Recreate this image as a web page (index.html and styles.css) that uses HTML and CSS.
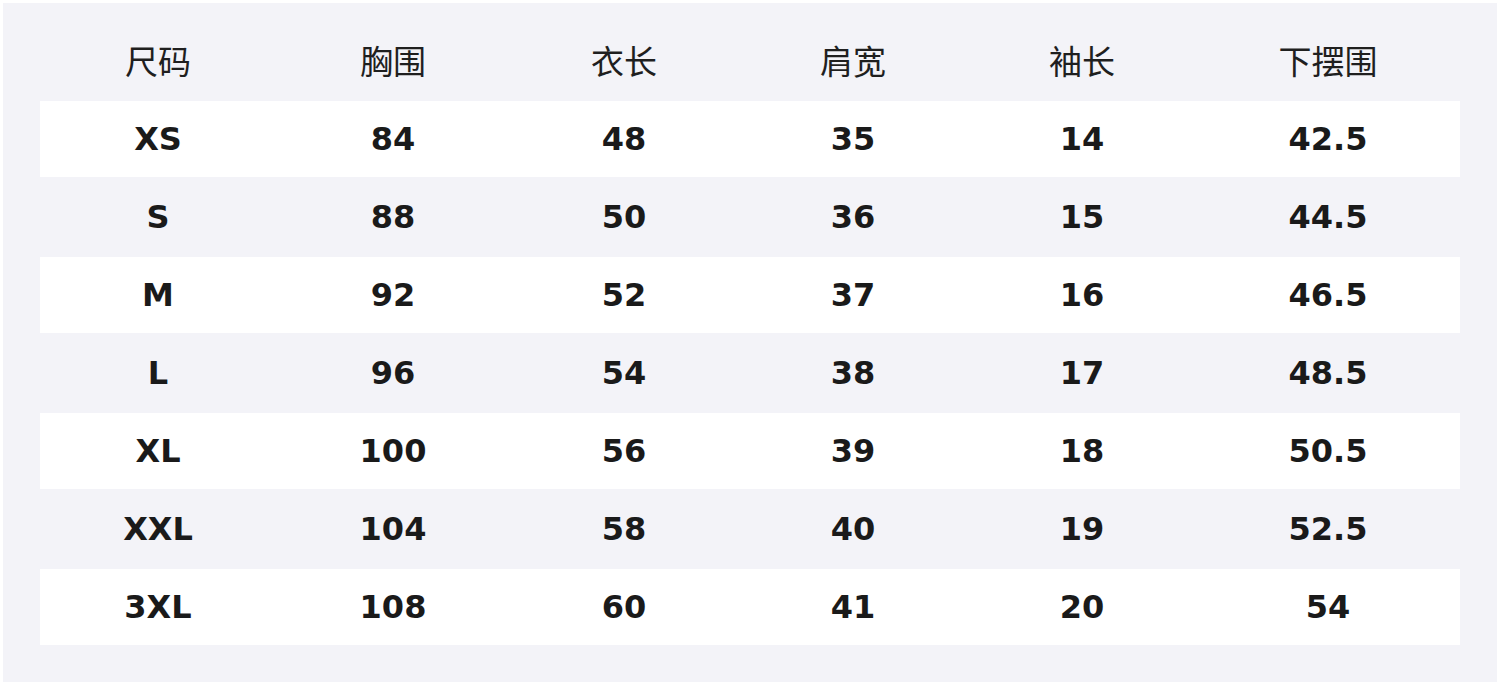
FILE: index.html
```html
<!DOCTYPE html>
<html lang="zh-CN">
<head>
<meta charset="utf-8">
<title>尺码表</title>
<link rel="stylesheet" href="styles.css">
</head>
<body>
<div class="panel">
  <table class="size-table">
    <colgroup>
      <col class="c1"><col class="c2"><col class="c3"><col class="c4"><col class="c5"><col class="c6">
    </colgroup>
    <thead>
      <tr><th>尺码</th><th>胸围</th><th>衣长</th><th>肩宽</th><th>袖长</th><th>下摆围</th></tr>
    </thead>
    <tbody>
      <tr class="odd"><td>XS</td><td>84</td><td>48</td><td>35</td><td>14</td><td>42.5</td></tr>
      <tr><td>S</td><td>88</td><td>50</td><td>36</td><td>15</td><td>44.5</td></tr>
      <tr class="odd"><td>M</td><td>92</td><td>52</td><td>37</td><td>16</td><td>46.5</td></tr>
      <tr><td>L</td><td>96</td><td>54</td><td>38</td><td>17</td><td>48.5</td></tr>
      <tr class="odd"><td>XL</td><td>100</td><td>56</td><td>39</td><td>18</td><td>50.5</td></tr>
      <tr><td>XXL</td><td>104</td><td>58</td><td>40</td><td>19</td><td>52.5</td></tr>
      <tr class="odd"><td>3XL</td><td>108</td><td>60</td><td>41</td><td>20</td><td>54</td></tr>
    </tbody>
  </table>
</div>
</body>
</html>
```

FILE: styles.css
```css
html, body {
  margin: 0;
  padding: 0;
  background: #ffffff;
}
body {
  padding: 3px;
}
.panel {
  width: 1494px;
  height: 679px;
  box-sizing: border-box;
  background: #f3f3f8;
  padding: 18px 37px 35px 37px;
}
.size-table {
  width: 1420px;
  table-layout: fixed;
  border-collapse: separate;
  border-spacing: 0 2px;
}
.c1 { width: 236px; }
.c2 { width: 234px; }
.c3 { width: 228px; }
.c4 { width: 230px; }
.c5 { width: 228px; }
.c6 { width: 264px; }
.size-table th {
  height: 73px;
  padding: 0 0 3px 0;
  font-family: "Noto Sans CJK SC", "Noto Sans", sans-serif;
  font-weight: 400;
  font-size: 33px;
  color: #1f1f1f;
  text-align: center;
  vertical-align: middle;
}
.size-table td {
  height: 76px;
  padding: 0;
  font-family: "DejaVu Sans", sans-serif;
  font-weight: 700;
  font-size: 32px;
  color: #1a1a1a;
  text-align: center;
  vertical-align: middle;
}
.size-table tr.odd td {
  background: #ffffff;
}
```
